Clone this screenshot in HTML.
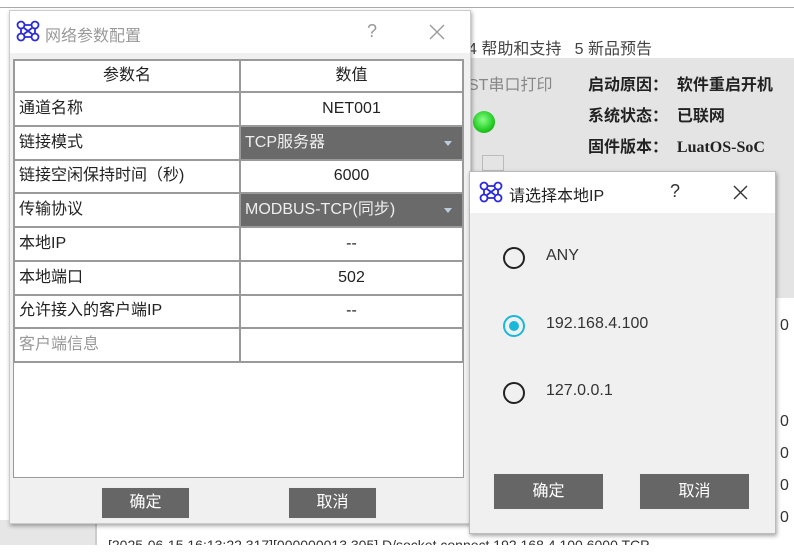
<!DOCTYPE html>
<html><head><meta charset="utf-8"><style>
*{margin:0;padding:0;box-sizing:border-box}
body{width:794px;height:560px;position:relative;overflow:hidden;background:#fff;font-family:"Liberation Sans","Noto Sans CJK SC",sans-serif;font-size:16px;color:#222}
.abs{position:absolute}
.btn{position:absolute;background:#666;color:#fff;text-align:center;font-size:16px;border:1px solid #eee}
table{border-collapse:collapse}
td{border:2px solid #9a9a9a;height:33.75px;padding:0 4px;font-size:16px;line-height:20px;vertical-align:middle}
.sel{background:#6a6a6a;color:#eee;position:relative}
.sel:after{content:"";position:absolute;right:10px;top:14px;border:4px solid transparent;border-top:5px solid #bcd;}
.radio{position:absolute;width:22px;height:22px;border:2px solid #222;border-radius:50%}
</style></head><body>
<div class="abs" style="left:0;top:0;width:794px;height:8px;background:#fff;border-bottom:1px solid #aaa"></div>
<div class="abs" style="left:0;top:30px;width:794px;height:28px;background:#fff"></div>
<div class="abs" style="left:468px;top:35px;font-size:16px;color:#444">4 帮助和支持 &nbsp;&nbsp;5 新品预告</div>
<div class="abs" style="left:470px;top:58px;width:324px;height:240px;background:#e4e4e4"></div>
<div class="abs" style="left:776px;top:298px;width:18px;height:240px;background:#fff"></div>
<div class="abs" style="left:468px;top:71px;color:#888;font-size:16px">ST串口打印</div>
<div class="abs" style="left:473px;top:111px;width:22px;height:22px;border-radius:50%;background:radial-gradient(circle at 45% 40%,#8f8,#2c2 60%,#181)"></div>
<div class="abs" style="left:482px;top:155px;width:22px;height:16px;border:1px solid #bbb"></div>
<div class="abs" style="left:588px;top:70px;font-weight:bold;font-size:16px;line-height:31px;white-space:nowrap">启动原因：&nbsp;&nbsp;软件重启开机<br>系统状态：&nbsp;&nbsp;已联网<br>固件版本：&nbsp;&nbsp;<span style="font-family:'Liberation Serif',serif">LuatOS-SoC</span></div>
<div class="abs" style="left:780px;top:310px;color:#333;line-height:32px">0<br><br><br>0<br>0<br>0<br>0</div>
<div class="abs" style="left:0;top:520px;width:97px;height:25px;background:#e6e6e6;border-right:2px solid #ccc"></div>
<div class="abs" style="left:108px;top:536px;font-size:14px;color:#333;white-space:nowrap;height:9px;overflow:hidden;line-height:18px">[2025-06-15 16:13:22.317][000000013.305] D/socket connect 192.168.4.100 6000 TCP</div>
<div class="abs" style="left:0;top:545px;width:794px;height:15px;background:#fff"></div>

<div class="abs" style="left:9px;top:10px;width:462px;height:514px;background:#f0f0f0;box-shadow:1px 2px 4px rgba(0,0,0,.35);border:1px solid #ccc">
 <div class="abs" style="left:0;top:0;width:460px;height:42px;background:#fff"></div>
 <svg class="abs" style="left:6px;top:9px" width="24" height="22" viewBox="0 0 24 22" fill="none" stroke="#2a2ad8" stroke-width="1.8"><circle cx="5" cy="5" r="3.5"/><circle cx="19" cy="5" r="3.5"/><circle cx="5" cy="17" r="3.5"/><circle cx="19" cy="17" r="3.5"/><path d="M8.5 5H15.5M8.5 17H15.5M5 8.5V13.5M19 8.5V13.5M8 8L16 14M16 8L8 14"/></svg>
 <div class="abs" style="left:35px;top:11px;color:#999;font-size:16px">网络参数配置</div>
 <div class="abs" style="left:357px;top:10px;color:#999;font-size:18px">?</div>
 <svg class="abs" style="left:419px;top:13px" width="16" height="16"><path d="M1 1L15 15M15 1L1 15" stroke="#999" stroke-width="1.3"/></svg>
 <div class="abs" style="left:3px;top:48px;width:451px;height:419px;background:#fff;border:1px solid #9a9a9a"></div>
 <table class="abs" style="left:3px;top:48px;width:451px">
  <tr><td style="width:226px;text-align:center;height:32px">参数名</td><td style="text-align:center;height:32px">数值</td></tr>
  <tr><td>通道名称</td><td style="text-align:center">NET001</td></tr>
  <tr><td>链接模式</td><td class="sel">TCP服务器</td></tr>
  <tr><td>链接空闲保持时间（秒)</td><td style="text-align:center">6000</td></tr>
  <tr><td>传输协议</td><td class="sel">MODBUS-TCP(同步)</td></tr>
  <tr><td>本地IP</td><td style="text-align:center">--</td></tr>
  <tr><td>本地端口</td><td style="text-align:center">502</td></tr>
  <tr><td>允许接入的客户端IP</td><td style="text-align:center">--</td></tr>
  <tr><td style="color:#999">客户端信息</td><td></td></tr>
 </table>
 <div class="btn" style="left:91px;top:476px;width:89px;height:32px;line-height:30px">确定</div>
 <div class="btn" style="left:278px;top:476px;width:89px;height:32px;line-height:30px">取消</div>
</div>

<div class="abs" style="left:469px;top:171px;width:307px;height:363px;background:#f0f0f0;box-shadow:1px 2px 4px rgba(0,0,0,.35);border:1px solid #bbb">
 <div class="abs" style="left:0;top:0;width:305px;height:41px;background:#fff"></div>
 <svg class="abs" style="left:9px;top:9px" width="24" height="22" viewBox="0 0 24 22" fill="none" stroke="#2a2ad8" stroke-width="1.8"><circle cx="5" cy="5" r="3.5"/><circle cx="19" cy="5" r="3.5"/><circle cx="5" cy="17" r="3.5"/><circle cx="19" cy="17" r="3.5"/><path d="M8.5 5H15.5M8.5 17H15.5M5 8.5V13.5M19 8.5V13.5M8 8L16 14M16 8L8 14"/></svg>
 <div class="abs" style="left:39px;top:10px;font-size:16px;color:#222">请选择本地IP</div>
 <div class="abs" style="left:200px;top:9px;font-size:18px;color:#333">?</div>
 <svg class="abs" style="left:263px;top:13px" width="15" height="15"><path d="M1 1L14 14M14 1L1 14" stroke="#333" stroke-width="1.4"/></svg>
 <div class="radio" style="left:33px;top:75px"></div>
 <div class="abs" style="left:76px;top:75px;color:#333">ANY</div>
 <div class="radio" style="left:33px;top:143px;border-color:#1ab8d8"><div style="position:absolute;left:4px;top:4px;width:10px;height:10px;border-radius:50%;background:#1ab8d8"></div></div>
 <div class="abs" style="left:76px;top:143px;color:#333">192.168.4.100</div>
 <div class="radio" style="left:33px;top:210px"></div>
 <div class="abs" style="left:76px;top:210px;color:#333">127.0.0.1</div>
 <div class="btn" style="left:23px;top:301px;width:111px;height:37px;line-height:35px">确定</div>
 <div class="btn" style="left:169px;top:301px;width:111px;height:37px;line-height:35px">取消</div>
</div>
</body></html>
